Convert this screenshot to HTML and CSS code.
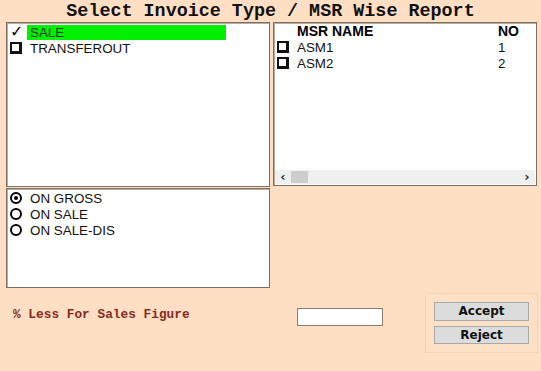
FILE: index.html
```html
<!DOCTYPE html>
<html lang="en">
<head>
    <meta charset="UTF-8">
    <title>Select Invoice Type / MSR Wise Report</title>
    <link rel="stylesheet" href="styles.css">
</head>
<body>
    <div class="container">
        <h1 class="title">Select Invoice Type / MSR Wise Report</h1>
        <div class="panels">
            <div class="left-col">
                <div class="box type-box">
                    <div class="row">
                        <span class="mark tick">&#10003;</span>
                        <span class="item selected">SALE</span>
                    </div>
                    <div class="row">
                        <span class="mark"><span class="chk"></span></span>
                        <span class="item">TRANSFEROUT</span>
                    </div>
                </div>
                <div class="box radio-box">
                    <div class="row">
                        <span class="mark"><span class="radio on"></span></span>
                        <span class="item">ON GROSS</span>
                    </div>
                    <div class="row">
                        <span class="mark"><span class="radio"></span></span>
                        <span class="item">ON SALE</span>
                    </div>
                    <div class="row">
                        <span class="mark"><span class="radio"></span></span>
                        <span class="item">ON SALE-DIS</span>
                    </div>
                </div>
            </div>
            <div class="box msr-box">
                <div class="msr-list">
                    <div class="msr-row head">
                        <span class="mark"></span>
                        <span class="name">MSR NAME</span>
                        <span class="no">NO</span>
                    </div>
                    <div class="msr-row">
                        <span class="mark"><span class="chk"></span></span>
                        <span class="name">ASM1</span>
                        <span class="no">1</span>
                    </div>
                    <div class="msr-row">
                        <span class="mark"><span class="chk"></span></span>
                        <span class="name">ASM2</span>
                        <span class="no">2</span>
                    </div>
                </div>
                <div class="hscroll">
                    <span class="arrow">&#8249;</span>
                    <span class="thumb"></span>
                    <span class="track"></span>
                    <span class="arrow">&#8250;</span>
                </div>
            </div>
        </div>
        <div class="bottom">
            <label class="less-label" for="lessInput">% Less For Sales Figure</label>
            <input type="text" id="lessInput" class="less-input">
            <div class="btn-panel">
                <button type="button">Accept</button>
                <button type="button">Reject</button>
            </div>
        </div>
    </div>
</body>
</html>
```

FILE: styles.css
```css
*{
    margin: 0px;
    padding: 0px;
    box-sizing: border-box;
}
body {
    background-color: #ffdfc3;
    font-family: 'Liberation Sans', Arial, sans-serif;
    font-size: 13.4px;
    color: #111;
}
.container{
    width: 541px;
    height: 371px;
}
.title{
    height: 22px;
    text-align: center;
    font-family: 'Liberation Mono', 'Courier New', monospace;
    font-weight: bold;
    font-size: 18.4px;
    line-height: 24px;
    color: #111;
}
.panels{
    display: grid;
    grid-template-columns: 264px 264px;
    column-gap: 3px;
    padding-left: 6px;
}
.left-col{
    display: flex;
    flex-direction: column;
    gap: 1px;
}
.box{
    background-color: #fff;
    border: 1px solid #7d6f62;
    box-shadow: inset 1px 1px 0 #b9aca0;
}
.type-box{
    height: 165px;
    padding: 1px 3px;
}
.radio-box{
    height: 100px;
    padding: 1px 3px;
}
.row{
    display: flex;
    align-items: center;
    height: 16px;
}
.mark{
    width: 17px;
    display: flex;
    align-items: center;
    justify-content: flex-start;
    flex-shrink: 0;
}
.tick{
    font-family: 'DejaVu Sans', sans-serif;
    font-size: 16px;
    font-weight: bold;
    line-height: 16px;
    color: #000;
}
.chk{
    width: 12px;
    height: 12px;
    border: 2px solid #111;
    border-right-width: 3px;
    border-bottom-width: 3px;
    background-color: #fff;
}
.radio{
    width: 12px;
    height: 12px;
    border: 2.5px solid #000;
    border-radius: 50%;
    display: flex;
    align-items: center;
    justify-content: center;
}
.radio.on{
    border-width: 2px;
}
.radio.on::after{
    content: '';
    width: 4px;
    height: 4px;
    border-radius: 50%;
    background-color: #000;
}
.item{
    padding-left: 3px;
    height: 15px;
    line-height: 15px;
}
.selected{
    background-color: #00f000;
    width: 199px;
    color: #0a3a0a;
}
.msr-box{
    height: 164px;
    display: flex;
    flex-direction: column;
    justify-content: space-between;
    padding: 0px 1px 0px 3px;
}
.msr-row{
    display: flex;
    align-items: center;
    height: 16px;
}
.msr-row .mark{
    width: 20px;
}
.msr-row .name{
    width: 201px;
}
.msr-row.head{
    font-weight: bold;
    font-size: 14px;
    color: #000;
}
.hscroll{
    display: flex;
    align-items: center;
    height: 14px;
    background-color: #f0f0f0;
    margin-left: -2px;
    margin-bottom: 1px;
}
.arrow{
    width: 16px;
    text-align: center;
    font-family: 'DejaVu Sans', sans-serif;
    font-weight: bold;
    font-size: 13px;
    line-height: 12px;
    color: #333;
}
.thumb{
    width: 17px;
    height: 12px;
    background-color: #cdcdcd;
}
.track{
    flex: 1;
}
.bottom{
    display: flex;
    align-items: flex-start;
    padding-top: 5px;
    padding-left: 13px;
}
.less-label{
    width: 284px;
    margin-top: 14px;
    font-family: 'Liberation Mono', 'Courier New', monospace;
    font-weight: bold;
    font-size: 12.8px;
    color: #8b2a1e;
}
.less-input{
    width: 86px;
    height: 18px;
    margin-top: 15px;
    border: 1px solid #8a7d70;
    background-color: #fff;
    outline: none;
    margin-right: 42px;
}
.btn-panel{
    width: 113px;
    height: 60px;
    display: flex;
    flex-direction: column;
    gap: 5px;
    padding: 8px 8px;
    background-color: #fde0c6;
    border: 1px solid #f4d2b4;
}
button{
    width: 95px;
    height: 20px;
    background-color: #dcdcdc;
    border: 1px solid #a9a9a9;
    font-family: 'DejaVu Sans', sans-serif;
    font-weight: bold;
    font-size: 12px;
    color: #111;
}
```
